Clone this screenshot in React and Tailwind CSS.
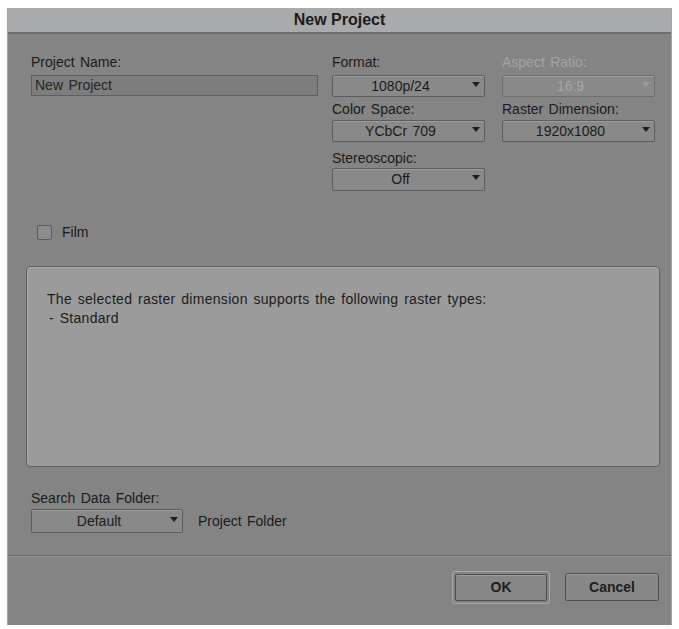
import React from "react";

function Arrow({ disabled }) {
  return (
    <span className="flex w-[16px] items-center justify-center pb-[4px]">
      <svg width="8" height="5" viewBox="0 0 8 5">
        <path d="M0 0H8L4 5Z" fill={disabled ? "#9c9c9c" : "#1e1e1e"} />
      </svg>
    </span>
  );
}

function Select({ value, disabled = false, h = "h-[22px]", w = "w-full" }) {
  return (
    <div
      className={`flex ${h} ${w} items-center rounded-[2px] border bg-[#898989] shadow-[inset_0_1px_0_#9d9d9d] ${
        disabled ? "border-[#6e6e6e] text-[#a6a6a6]" : "border-[#5c5c5c] text-[#1b1b1b]"
      }`}
    >
      <span className="flex-1 text-center">{value}</span>
      <Arrow disabled={disabled} />
    </div>
  );
}

function Label({ children, disabled = false, className = "" }) {
  return (
    <div
      className={`h-[16px] leading-[16px] ${
        disabled ? "text-[#a3a3a3]" : "text-[#1b1b1b]"
      } ${className}`}
    >
      {children}
    </div>
  );
}

export default function App() {
  return (
    <div className="min-h-[629px] w-[679px] bg-white pl-[7px] pt-[8px] font-['Liberation_Sans',Arial,sans-serif] text-[14px] [word-spacing:1.5px]">
      <div className="flex h-[617px] w-[665px] flex-col border-l border-r border-[#a3a3a3] bg-[#848484]">
        {/* title bar */}
        <div className="flex h-[26px] items-center justify-center border-b-2 border-[#6c6c6c] bg-[#a8aaac] text-[16px] font-bold text-[#1c1c1c] [word-spacing:0px]">
          New Project
        </div>

        {/* body */}
        <div className="flex flex-1 flex-col pt-[20px]">
          <div className="flex pl-[23px]">
            <div className="w-[287px]">
              <Label>Project Name:</Label>
              <div className="mt-[5px] flex h-[21px] items-center border border-[#5e5e5e] bg-[#7d7d7d] pl-[3px] text-[#262626]">
                New Project
              </div>
            </div>

            <div className="ml-[14px] w-[153px]">
              <Label>Format:</Label>
              <div className="mt-[5px]">
                <Select value="1080p/24" />
              </div>
              <Label className="mt-[4px]">Color Space:</Label>
              <div className="mt-[3px]">
                <Select value="YCbCr 709" />
              </div>
              <Label className="mt-[8px]">Stereoscopic:</Label>
              <div className="mt-[2px]">
                <Select value="Off" h="h-[23px]" />
              </div>
            </div>

            <div className="ml-[17px] w-[153px]">
              <Label disabled>Aspect Ratio:</Label>
              <div className="mt-[5px]">
                <Select value="16:9" disabled />
              </div>
              <Label className="mt-[4px]">Raster Dimension:</Label>
              <div className="mt-[3px]">
                <Select value="1920x1080" />
              </div>
            </div>
          </div>

          <div className="mt-[31px] flex items-center pl-[29px]">
            <div className="h-[15px] w-[15px] rounded-[2px] border border-[#5c5c5c] bg-[#8c8c8c]" />
            <span className="ml-[10px] text-[#1b1b1b]">Film</span>
          </div>

          <div className="ml-[18px] mr-[11px] mt-[23px] h-[201px] rounded-[4px] border border-[#5f5f5f] bg-[#9b9b9b] pl-[20px] pt-[23px] leading-[19px] tracking-[0.3px] text-[#1b1b1b] shadow-[inset_1px_1px_0_#aaaaaa]">
            <div>The selected raster dimension supports the following raster types:</div>
            <div className="pl-[2px]">- Standard</div>
          </div>

          <div className="mt-[23px] pl-[23px]">
            <Label>Search Data Folder:</Label>
            <div className="mt-[3px] flex items-center">
              <Select value="Default" h="h-[24px]" w="w-[152px]" />
              <span className="ml-[15px] text-[#1b1b1b]">Project Folder</span>
            </div>
          </div>
        </div>

        {/* footer */}
        <div className="flex h-[70px] items-start justify-end border-t border-[#6a6a6a] pr-[12px] pt-[15px] shadow-[inset_0_1px_0_#939393]">
          <div className="rounded-[3px] border border-[#a9a9a9] p-[2px]">
            <button className="flex h-[27px] w-[92px] items-center justify-center rounded-[2px] border border-[#4e4e4e] bg-[#878787] font-bold text-[#1e1e1e] shadow-[inset_0_1px_0_#9e9e9e]">
              OK
            </button>
          </div>
          <button className="ml-[15px] mt-[2px] flex h-[28px] w-[94px] items-center justify-center rounded-[2px] border border-[#4e4e4e] bg-[#878787] font-bold text-[#1e1e1e] shadow-[inset_0_1px_0_#9e9e9e]">
            Cancel
          </button>
        </div>
      </div>
    </div>
  );
}
